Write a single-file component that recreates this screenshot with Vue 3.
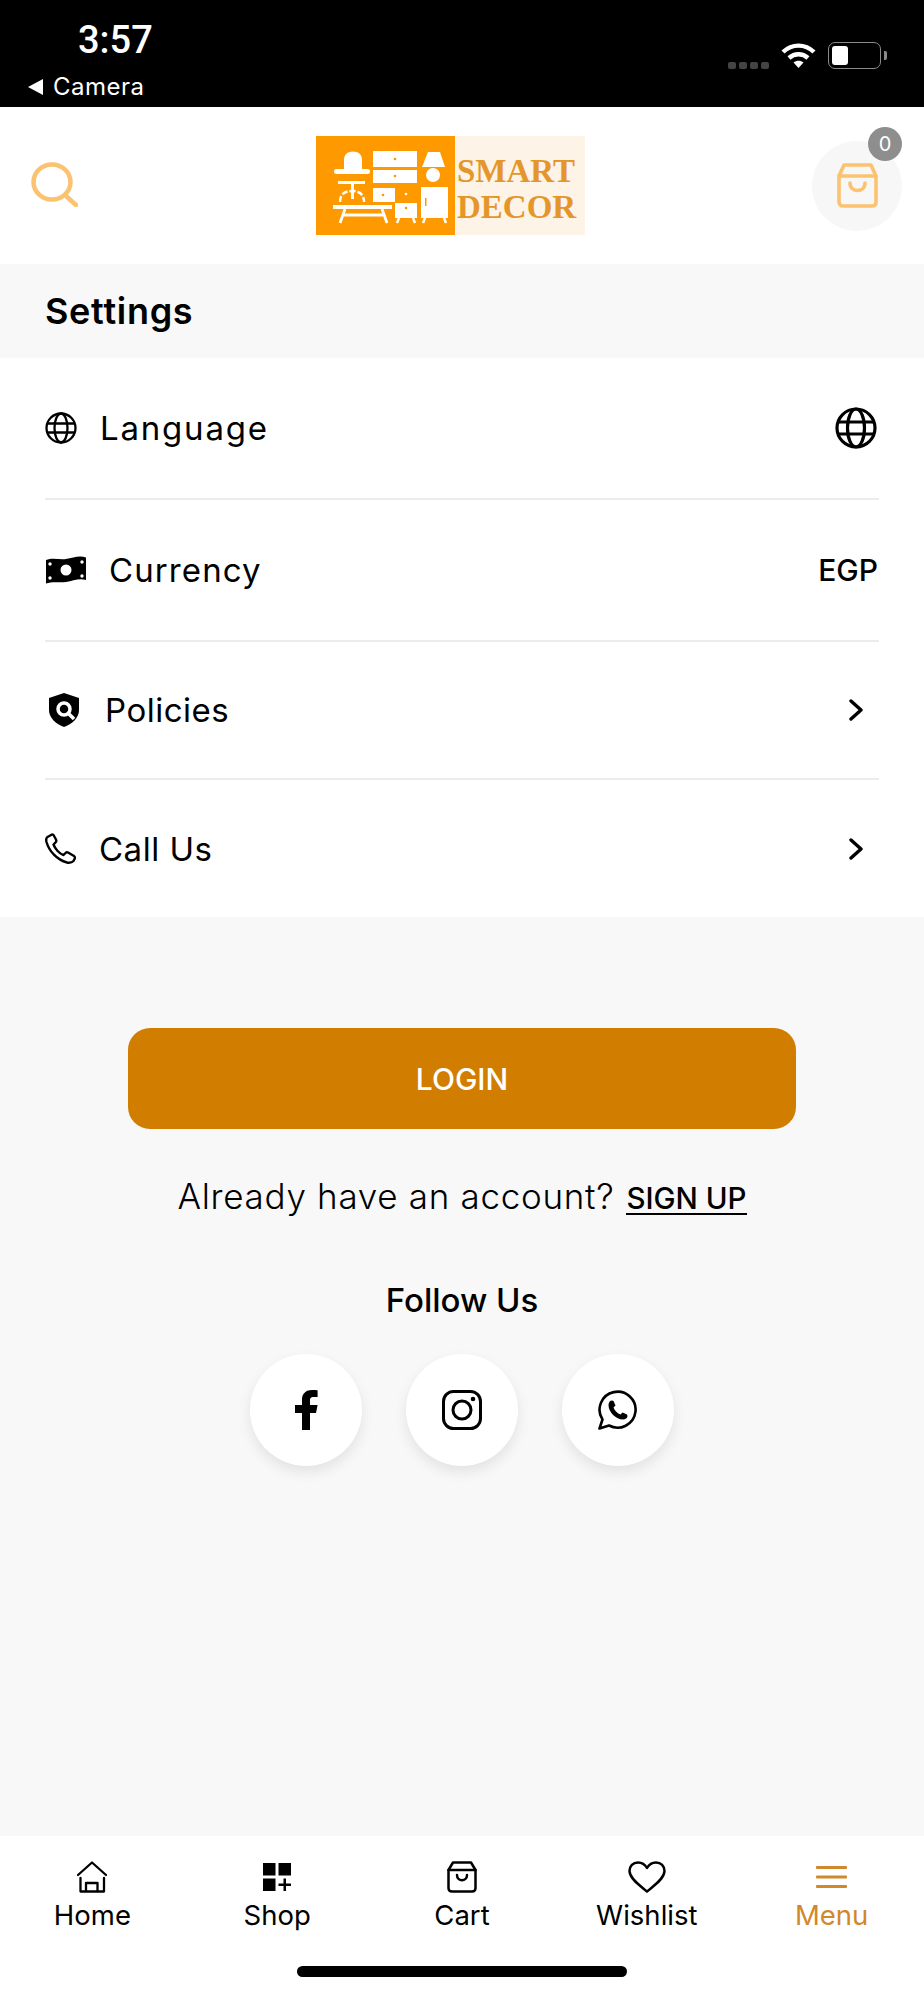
<template>
  <div class="page">
    <div class="status-bar">
      <div class="status-left">
        <div class="status-time">3:57</div>
        <div class="status-back"><span class="back-arrow"></span>Camera</div>
      </div>
      <div class="status-right">
        <div class="signal">
          <i v-for="n in 4" :key="n"></i>
        </div>
        <svg class="wifi" viewBox="0 0 35 27" fill="none" stroke="#fff" stroke-width="4.400">
          <path d="M2 10C11 1.500 24 1.500 33 10" />
          <path d="M8 16C13.500 11 21.500 11 27 16" />
          <path d="M17.500 26L12.500 20.500C15.500 18 19.500 18 22.500 20.500Z" fill="#fff" stroke="none" />
        </svg>
        <div class="battery"><span></span></div>
        <div class="battery-nub"></div>
      </div>
    </div>

    <header class="top-bar">
      <svg class="search-icon" viewBox="0 0 47 45" fill="none" stroke="#fbc26f" stroke-width="4.500" stroke-linecap="round">
        <ellipse cx="21" cy="20" rx="18.500" ry="17.500" />
        <path d="M35 34L45 43" />
      </svg>
      <div class="logo">
        <div class="logo-mark">
          <svg viewBox="0 0 139 99" width="139" height="99" fill="#fff">
            <path d="M28 33V24C28 19 31 15.500 37 15.500C43 15.500 46 19 46 24V33Z" />
            <rect x="18" y="33" width="36" height="5" rx="2.500" />
            <rect x="22" y="45" width="27" height="3" />
            <rect x="35" y="48" width="3" height="15" />
            <path d="M24 66C24 58 29 55 36 55C43 55 48 58 48 66" fill="none" stroke="#fff" stroke-width="2.500" stroke-dasharray="6 2" />
            <rect x="17" y="69" width="59" height="4" />
            <path d="M24 87L29 73M71 87L66 73M28 79H67" fill="none" stroke="#fff" stroke-width="2.800" />
            <rect x="57" y="15" width="44" height="16" />
            <rect x="57" y="34" width="44" height="13" />
            <rect x="57" y="52" width="22" height="14" />
            <rect x="79" y="67" width="22" height="15" />
            <path d="M83 82L81 87M97 82L99 87M109 82L107 87M128 82L130 87" fill="none" stroke="#fff" stroke-width="2.500" />
            <rect x="105" y="51" width="27" height="31" />
            <path d="M112 16H124L129 31H106Z" />
            <circle cx="117" cy="39" r="7" />
            <g fill="#ff9900">
              <circle cx="79" cy="23" r="1.300" />
              <circle cx="79" cy="40" r="1.300" />
              <circle cx="67" cy="59" r="1.300" />
              <circle cx="90" cy="72" r="1.300" />
              <rect x="109" y="62" width="1.500" height="8" />
            </g>
            <circle cx="90" cy="58" r="1.300" />
          </svg>
        </div>
        <div class="logo-text">
          <span>SMART</span>
          <span>DECOR</span>
        </div>
      </div>
      <div class="cart-button">
        <svg class="cart-icon" viewBox="0 0 41 45" fill="none" stroke="#fbc26f" stroke-width="3.600" stroke-linejoin="round" stroke-linecap="round">
          <path d="M7 2H34L39 13V39C39 41.500 37.500 43 35 43H6C3.500 43 2 41.500 2 39V13Z" />
          <path d="M2 13H39" />
          <path d="M13 20C13 30 28 30 28 20" />
        </svg>
        <span class="cart-badge">0</span>
      </div>
    </header>

    <div class="section-title">Settings</div>

    <section class="settings-list">
      <div class="settings-row row-language">
        <div class="row-left">
          <svg class="row-icon" width="32" height="32" viewBox="0 0 32 32" fill="none" stroke="#000" stroke-width="2.300">
            <circle cx="16" cy="16" r="14.500" />
            <ellipse cx="16" cy="16" rx="6.500" ry="14.500" />
            <path d="M2.500 11.500H29.500M2.500 20.500H29.500" />
          </svg>
          <span>Language</span>
        </div>
        <svg width="42" height="42" viewBox="0 0 42 42" fill="none" stroke="#000" stroke-width="3.200">
          <circle cx="21" cy="21" r="19" />
          <ellipse cx="21" cy="21" rx="8.500" ry="19" />
          <path d="M3 15H39M3 27H39" />
        </svg>
      </div>
      <div class="settings-row row-currency">
        <div class="row-left">
          <svg class="row-icon" width="42" height="28" viewBox="0 0 42 28">
            <path d="M1 4C8 1 14 4 21 3C28 2 34 -1 41 1.500V24C34 22 28 25 21 26C14 27 8 25 1 27.500Z" fill="#000" />
            <circle cx="21" cy="14" r="5.500" fill="#fff" />
            <g fill="#fff">
              <circle cx="5" cy="8" r="1.700" />
              <circle cx="37" cy="6" r="1.700" />
              <circle cx="5" cy="22" r="1.700" />
              <circle cx="37" cy="20" r="1.700" />
            </g>
          </svg>
          <span>Currency</span>
        </div>
        <span class="row-value">EGP</span>
      </div>
      <div class="settings-row row-policies">
        <div class="row-left">
          <svg class="row-icon" width="30" height="34" viewBox="0 0 30 34">
            <path d="M15 0L30 5V17C30 25 23 31 15 34C7 31 0 25 0 17V5Z" fill="#000" />
            <circle cx="15" cy="16" r="6" fill="none" stroke="#fff" stroke-width="3.500" />
            <path d="M19 20L25 26" stroke="#fff" stroke-width="3.500" />
          </svg>
          <span>Policies</span>
        </div>
        <svg class="chevron" width="14" height="22" viewBox="0 0 14 22" fill="none" stroke="#000" stroke-width="3.400" stroke-linecap="round" stroke-linejoin="round">
          <path d="M2 2L12 11L2 20" />
        </svg>
      </div>
      <div class="settings-row row-call">
        <div class="row-left">
          <svg class="row-icon" width="31" height="31" viewBox="0 0 31 31" fill="none" stroke="#000" stroke-width="2.400" stroke-linejoin="round">
            <path d="M7 1.500L2.500 4C1 5 1 7 1.500 9C4 18 12 27 22 29.500C25 30 27 29.500 28.500 28L30 25C30 24 29.500 23.500 29 23L23 19.500C22 19 21 19.500 20.500 20L18.500 22C14 20.500 10 15.500 8.500 11.500L10.500 9.500C11.500 8.500 11.500 7.500 11 6.500L8.500 2C8 1.500 7.500 1.500 7 1.500Z" />
          </svg>
          <span>Call Us</span>
        </div>
        <svg class="chevron" width="14" height="22" viewBox="0 0 14 22" fill="none" stroke="#000" stroke-width="3.400" stroke-linecap="round" stroke-linejoin="round">
          <path d="M2 2L12 11L2 20" />
        </svg>
      </div>
    </section>

    <main class="account">
      <button type="button" class="login-btn">LOGIN</button>
      <p class="signup-line">
        <span class="signup-text">Already have an account?</span>
        <a class="signup-link">SIGN UP</a>
      </p>
      <h2 class="follow-title">Follow Us</h2>
      <div class="socials">
        <div class="social">
          <svg width="44" height="44" viewBox="3 1 18 22" fill="#000">
            <path d="M14 13.500h3l.8-4H14v-2c0-1.030 0-2 2-2h1.800V2.140c-.326-.043-1.557-.14-2.857-.14C12.228 2 10 3.657 10 6.700v2.800H6.500v4H10V22h4z" />
          </svg>
        </div>
        <div class="social">
          <svg width="40" height="40" viewBox="0 0 40 40" fill="none" stroke="#000" stroke-width="3">
            <rect x="1.500" y="1.500" width="37" height="37" rx="10" />
            <circle cx="20" cy="20" r="9" />
            <circle cx="31" cy="9" r="2.300" fill="#000" stroke="none" />
          </svg>
        </div>
        <div class="social">
          <svg width="40" height="40" viewBox="0 0 40 40">
            <path d="M1.500 38.500L4.500 29.500A18 18 0 1 1 11 35.500Z" fill="none" stroke="#000" stroke-width="2.600" stroke-linejoin="round" />
            <path d="M14 10.500C12 10.500 10.500 12.500 10.500 15C10.500 22 18 29.500 25 29.500C27.500 29.500 29.500 28 29.500 26L29 24.500L24.500 22.500L22.500 24.500C19.500 23.500 16.500 20.500 15.500 17.500L17.500 15.500L15.500 11Z" fill="#000" />
          </svg>
        </div>
      </div>
    </main>

    <nav class="tab-bar">
      <div class="tabs">
        <div v-for="tab in tabs" :key="tab.label" class="tab" :class="{ active: tab.active }">
          <div class="tab-icon">
            <svg v-if="tab.label === 'Home'" width="30" height="32" viewBox="0 0 30 32" fill="none" stroke="currentColor" stroke-width="2.300" stroke-linejoin="round" stroke-linecap="round">
              <path d="M1 14L15 1.500L29 14" />
              <path d="M3.500 17V30.500H27V17" />
              <path d="M9 30V22H20.500V30" />
            </svg>
            <svg v-else-if="tab.label === 'Shop'" width="28" height="28" viewBox="0 0 28 28" fill="currentColor">
              <rect x="0" y="0" width="12.500" height="12.500" />
              <rect x="15.500" y="0" width="12.500" height="12.500" />
              <rect x="0" y="15.500" width="12.500" height="12.500" />
              <path d="M20.500 15.500H23V20.500H28V23H23V28H20.500V23H15.500V20.500H20.500Z" />
            </svg>
            <svg v-else-if="tab.label === 'Cart'" width="30" height="32" viewBox="0 0 30 32" fill="none" stroke="currentColor" stroke-width="2.500" stroke-linejoin="round" stroke-linecap="round">
              <path d="M6 1.500H24L28.500 9V27C28.500 29.500 27 30.500 25 30.500H5C3 30.500 1.500 29.500 1.500 27V9Z" />
              <path d="M1.500 9H28.500" />
              <path d="M10 14C10 21 20 21 20 14" />
            </svg>
            <svg v-else-if="tab.label === 'Wishlist'" width="38" height="32" viewBox="0 0 38 32" fill="none" stroke="currentColor" stroke-width="2.500" stroke-linejoin="round">
              <path d="M19 30.500C14 26 1.500 18 1.500 10C1.500 5 5 1.500 10 1.500C14 1.500 17 3.500 19 7C21 3.500 24 1.500 28 1.500C33 1.500 36.500 5 36.500 10C36.500 18 24 26 19 30.500Z" />
            </svg>
            <svg v-else width="31" height="22" viewBox="0 0 31 22" fill="currentColor">
              <rect x="0" y="0" width="31" height="3" rx="1" />
              <rect x="0" y="9.500" width="31" height="3" rx="1" />
              <rect x="0" y="19" width="31" height="3" rx="1" />
            </svg>
          </div>
          <span class="tab-label">{{ tab.label }}</span>
        </div>
      </div>
      <div class="home-indicator"></div>
    </nav>
  </div>
</template>

<script setup>
const tabs = [
  { label: 'Home' },
  { label: 'Shop' },
  { label: 'Cart' },
  { label: 'Wishlist' },
  { label: 'Menu', active: true },
]
</script>

<style>
html,
body {
  margin: 0;
  background: #f8f8f8;
}
</style>

<style scoped>
.page {
  width: 924px;
  height: 2000px;
  display: flex;
  flex-direction: column;
  font-family: Inter, 'Liberation Sans', sans-serif;
  color: #000;
  background: #f8f8f8;
  overflow: hidden;
}

/* Status bar */
.status-bar {
  height: 107px;
  flex-shrink: 0;
  box-sizing: border-box;
  background: #000;
  color: #fff;
  display: flex;
  justify-content: space-between;
  padding: 0 37px 0 28px;
}

.status-time {
  margin: 19px 0 0 50px;
  font-size: 38px;
  line-height: 42px;
  font-weight: 500;
  font-family: Roboto, 'Liberation Sans', sans-serif;
}

.status-back {
  display: flex;
  align-items: center;
  margin-top: 12px;
  font-size: 24px;
  line-height: 28px;
  letter-spacing: 0.5px;
}

.back-arrow {
  width: 0;
  height: 0;
  border-style: solid;
  border-width: 8px 15px 8px 0;
  border-color: transparent #fff transparent transparent;
  margin-right: 10px;
}

.status-right {
  display: flex;
  align-items: flex-end;
  padding-bottom: 38px;
}

.signal {
  display: flex;
  gap: 3px;
  margin-right: 12px;
}

.signal i {
  width: 8px;
  height: 7px;
  border-radius: 2px;
  background: #444;
}

.wifi {
  width: 35px;
  height: 27px;
  margin-right: 12px;
}

.battery {
  width: 53px;
  height: 27px;
  box-sizing: border-box;
  border: 1.500px solid #8a8a8a;
  border-radius: 7px;
  padding: 3px;
}

.battery span {
  display: block;
  width: 16px;
  height: 100%;
  border-radius: 3px;
  background: #fff;
}

.battery-nub {
  width: 3px;
  height: 9px;
  margin: 0 0 9px 3px;
  border-radius: 0 2px 2px 0;
  background: #8a8a8a;
}

/* Header */
.top-bar {
  height: 157px;
  flex-shrink: 0;
  box-sizing: border-box;
  background: #fff;
  display: flex;
  align-items: center;
  padding: 0 22px 0 31px;
}

.search-icon {
  width: 47px;
  height: 45px;
  margin-top: -2px;
}

.logo {
  width: 269px;
  height: 99px;
  display: flex;
  margin-left: 238px;
}

.logo-mark {
  width: 139px;
  height: 99px;
  background: #ff9900;
}

.logo-text {
  flex: 1;
  box-sizing: border-box;
  padding: 17px 0 0 2px;
  background: #fdf3e7;
  display: flex;
  flex-direction: column;
  font-family: 'Liberation Serif', serif;
  font-weight: 700;
  font-size: 33px;
  line-height: 36px;
  color: #e5962a;
}

.cart-button {
  position: relative;
  width: 90px;
  height: 90px;
  margin-left: auto;
  border-radius: 50%;
  background: #f7f7f7;
  display: flex;
  align-items: center;
  justify-content: center;
}

.cart-icon {
  width: 41px;
  height: 45px;
}

.cart-badge {
  position: absolute;
  top: -14px;
  right: 0;
  width: 34px;
  height: 34px;
  border-radius: 50%;
  background: #8e8e8e;
  color: #fff;
  font-size: 20px;
  line-height: 34px;
  text-align: center;
}

/* Settings */
.section-title {
  height: 94px;
  flex-shrink: 0;
  box-sizing: border-box;
  padding-left: 45px;
  background: #f8f8f8;
  font-size: 36px;
  font-weight: 600;
  letter-spacing: 0.7px;
  line-height: 94px;
}

.settings-list {
  flex-shrink: 0;
  background: #fff;
  padding: 0 45px;
}

.settings-row {
  display: flex;
  align-items: center;
  justify-content: space-between;
  box-sizing: border-box;
  border-bottom: 2px solid #ececec;
  font-size: 33px;
}

.row-language {
  height: 142px;
  letter-spacing: 1.800px;
}

.row-currency {
  height: 142px;
  letter-spacing: 1.100px;
}

.row-policies {
  height: 138px;
  letter-spacing: 0.500px;
}

.row-call {
  height: 137px;
  border-bottom: 0;
  letter-spacing: 0.500px;
}

.row-left {
  display: flex;
  align-items: center;
}

.row-language .row-left span,
.row-call .row-left span {
  margin-left: 23px;
}

.row-currency .row-left span {
  margin-left: 22px;
}

.row-policies .row-icon {
  margin-left: 4px;
}

.row-policies .row-left span {
  margin-left: 26px;
}

.row-language > svg {
  margin-right: 2px;
}

.row-value {
  font-size: 30px;
  font-weight: 500;
  letter-spacing: 0;
  margin-right: 1px;
}

.chevron {
  margin-right: 16px;
}

/* Account */
.account {
  flex: 1;
  display: flex;
  flex-direction: column;
  align-items: center;
  padding-top: 111px;
}

.login-btn {
  width: 668px;
  height: 101px;
  border: 0;
  border-radius: 22px;
  background: #d17d00;
  color: #fff;
  font-family: inherit;
  font-size: 30px;
  font-weight: 500;
}

.signup-line {
  display: flex;
  align-items: baseline;
  margin: 44px 0 0;
  font-size: 35px;
  line-height: 46px;
  letter-spacing: 0.7px;
}

.signup-text {
  font-weight: 300;
}

.signup-link {
  margin-left: 12px;
  font-size: 29.500px;
  font-weight: 500;
  letter-spacing: 0;
  line-height: 30px;
  border-bottom: 2px solid #000;
}

.follow-title {
  margin: 59px 0 0;
  font-size: 33px;
  font-weight: 500;
  line-height: 44px;
}

.socials {
  display: flex;
  gap: 44px;
  margin-top: 32px;
}

.social {
  width: 112px;
  height: 112px;
  border-radius: 50%;
  background: #fff;
  box-shadow: 0 6px 14px rgba(0, 0, 0, 0.09);
  display: flex;
  align-items: center;
  justify-content: center;
}

/* Tab bar */
.tab-bar {
  height: 164px;
  flex-shrink: 0;
  box-sizing: border-box;
  background: #fff;
  padding-top: 25px;
  display: flex;
  flex-direction: column;
  align-items: center;
}

.tabs {
  width: 100%;
  display: grid;
  grid-template-columns: repeat(5, 1fr);
}

.tab {
  display: flex;
  flex-direction: column;
  align-items: center;
}

.tab.active {
  color: #d1882a;
}

.tab-icon {
  height: 32px;
  display: flex;
  align-items: center;
}

.tab-label {
  margin-top: 5px;
  font-size: 27.500px;
  line-height: 34px;
}

.home-indicator {
  width: 330px;
  height: 11px;
  margin-top: 34px;
  border-radius: 6px;
  background: #000;
}
</style>
